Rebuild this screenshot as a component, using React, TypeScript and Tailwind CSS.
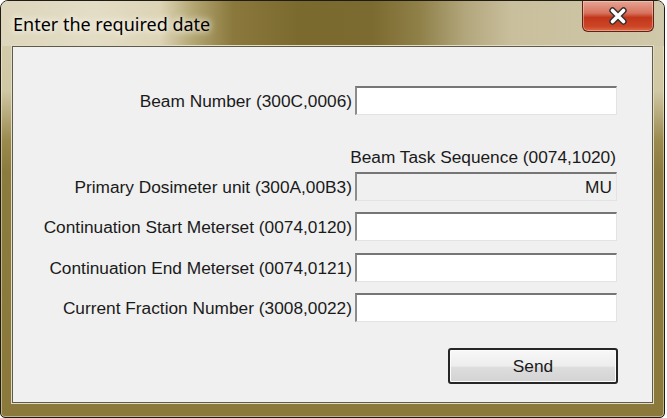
const fieldBorder =
  'h-[29px] w-[262px] shrink-0 border-t-2 border-l-2 border-r border-b border-t-[#767676] border-l-[#8c8c8c] border-r-[#e3e3e3] border-b-[#e3e3e3]';

function Row({ label, children, className = '' }: { label: string; children: React.ReactNode; className?: string }) {
  return (
    <div className={`flex items-center gap-[3px] ${className}`}>
      <div className="w-[339px] shrink-0 whitespace-nowrap text-right">{label}</div>
      {children}
    </div>
  );
}

function CloseButton() {
  return (
    <div className="mr-[10px] flex h-[31px] w-[72px] items-center justify-center rounded-b-[6px] border border-t-0 border-[#5b231a] bg-[linear-gradient(to_bottom,#e6a494_0%,#d7735e_40%,#c2361c_55%,#cc4526_85%,#dc6c44_100%)] shadow-[inset_0_0_0_1px_rgba(255,220,200,0.45)]">
      <svg width="22" height="18" viewBox="0 0 22 18">
        <path d="M5.5 3.5 L16.5 14.5 M16.5 3.5 L5.5 14.5" stroke="#3a3030" strokeWidth="6.4" strokeLinecap="round" />
        <path d="M5.5 3.5 L16.5 14.5 M16.5 3.5 L5.5 14.5" stroke="#ffffff" strokeWidth="3.6" strokeLinecap="round" />
      </svg>
    </div>
  );
}

export default function App() {
  return (
    <div className="h-[418px] w-[667px] bg-white">
      <div className="flex h-[418px] w-[665px] flex-col overflow-hidden rounded-t-[8px] rounded-b-[5px] border border-[#1e1c14] bg-[linear-gradient(to_bottom,#d6ceb0_0px,#d0c7a4_90px,#9a8a4e_140px,#8c7b3e_170px,#8a793b_100%)] shadow-[inset_0_0_0_1px_rgba(255,250,230,0.45)]">
        <div className="flex h-[45px] shrink-0 items-start justify-between bg-[linear-gradient(to_right,#ddd6bc_0%,#e4ddc6_14%,#ddd4b6_24%,#b3a672_29%,#8a783c_35%,#7b6a2e_45%,#7c6b30_56%,#8f8048_63%,#b2a67c_70%,#c9bf9c_77%,#d0c8aa_100%)]">
          <div className="flex h-[45px] items-center pl-[12px] font-['Noto_Sans',sans-serif] text-[18px] leading-[24px] text-black [text-shadow:0_0_6px_#ffffff,0_0_10px_#f4efdc]">
            Enter the required date
          </div>
          <CloseButton />
        </div>
        <div className="ml-[11px] h-[357px] w-[641px] shrink-0 border border-[#5e5a4c] bg-[#f0f0f0] pt-[39px] font-['Liberation_Sans',Arial,sans-serif] text-[17.3px] leading-[20px] text-[#1a1a1a] shadow-[0_0_0_1px_#e2dcc4]">
          <Row label="Beam Number (300C,0006)">
            <div className={`${fieldBorder} bg-white`} />
          </Row>
          <div className="mt-[32px] w-[603px] whitespace-nowrap text-right">Beam Task Sequence (0074,1020)</div>
          <Row label="Primary Dosimeter unit (300A,00B3)" className="mt-[5px]">
            <div className={`${fieldBorder} flex items-center justify-end bg-[#f0f0f0] pr-[4px]`}>MU</div>
          </Row>
          <Row label="Continuation Start Meterset (0074,0120)" className="mt-[11px]">
            <div className={`${fieldBorder} bg-white`} />
          </Row>
          <Row label="Continuation End Meterset (0074,0121)" className="mt-[12px]">
            <div className={`${fieldBorder} bg-white`} />
          </Row>
          <Row label="Current Fraction Number (3008,0022)" className="mt-[11px]">
            <div className={`${fieldBorder} bg-white`} />
          </Row>
          <div className="ml-[435px] mt-[26px] flex h-[36px] w-[170px] items-center justify-center rounded-[3px] border-2 border-[#262626] bg-[linear-gradient(to_bottom,#f8f8f8_0%,#ededed_50%,#dddddd_55%,#d3d3d3_100%)] shadow-[inset_0_0_0_1px_#fcfcfc]">
            Send
          </div>
        </div>
      </div>
    </div>
  );
}
